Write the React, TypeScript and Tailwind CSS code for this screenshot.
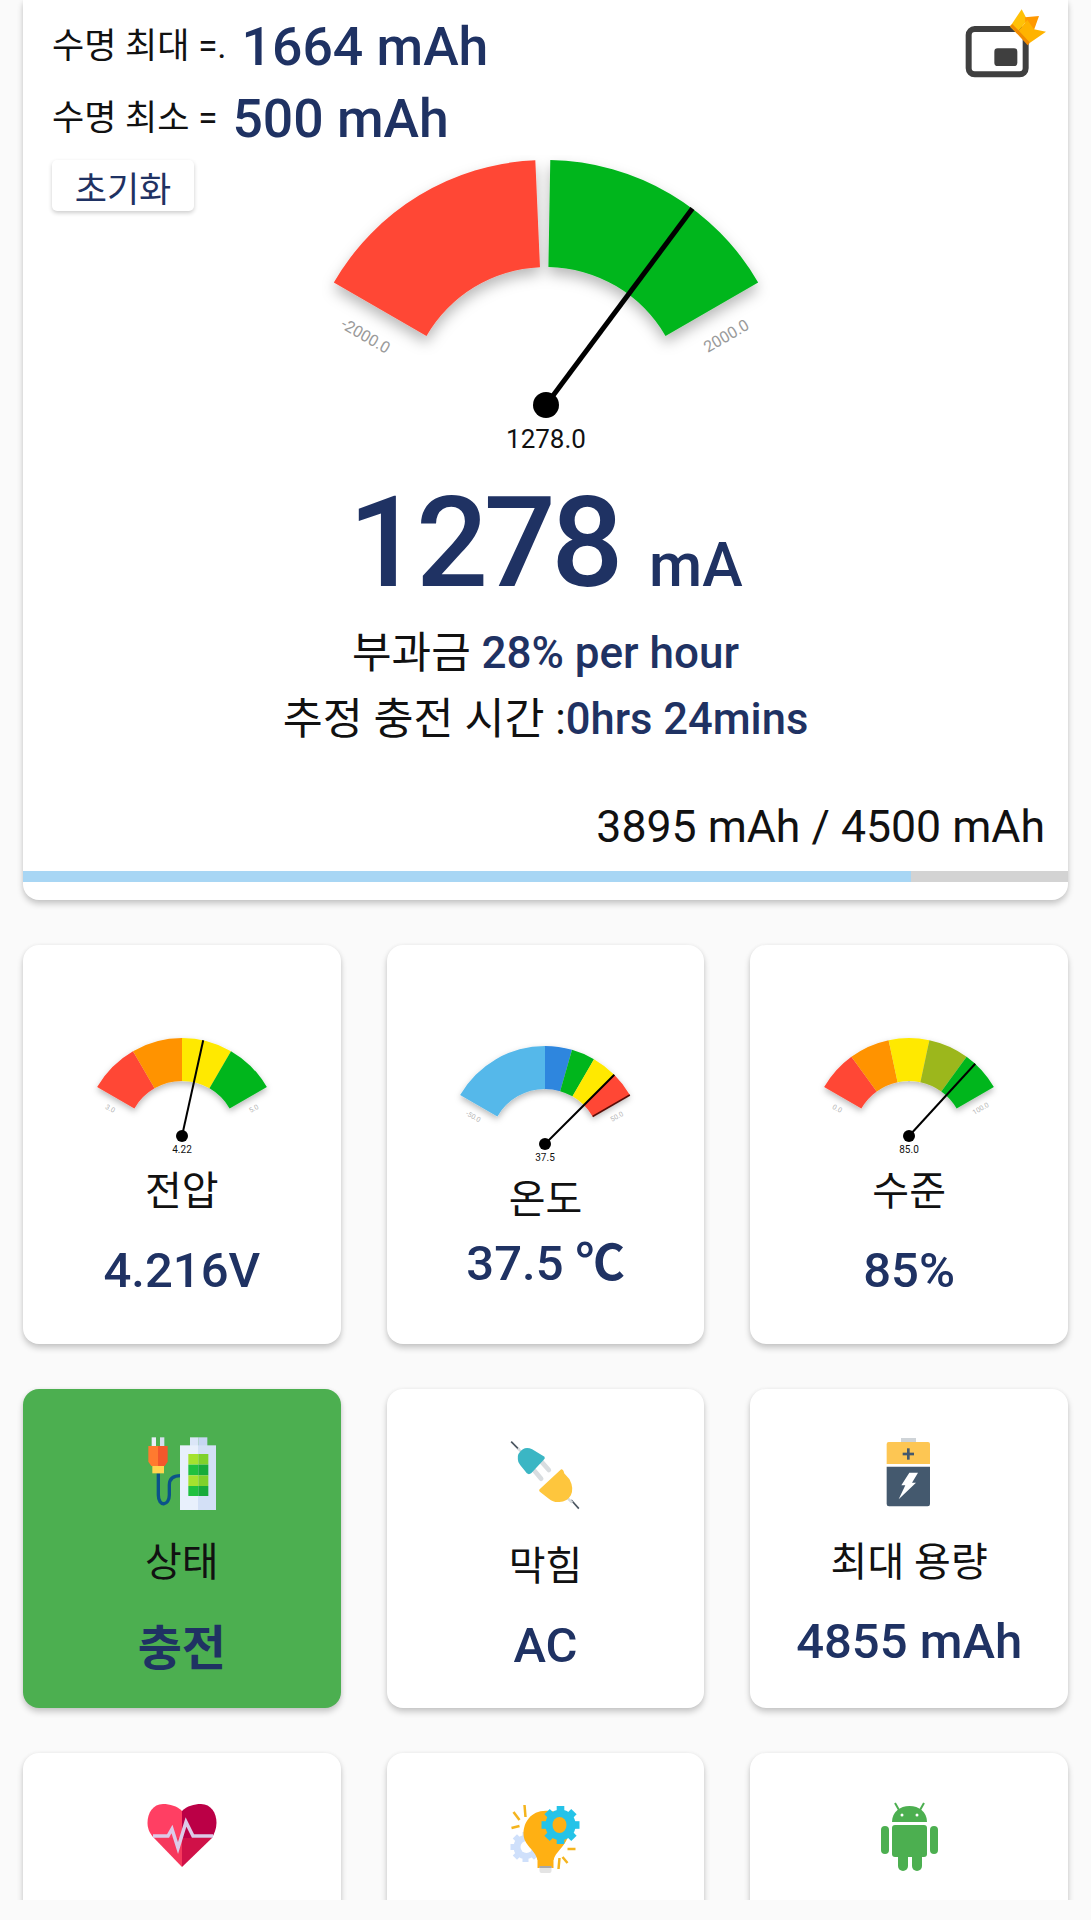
import React from 'react';

interface Segment {
  from: number;
  to: number;
  color: string;
}

interface GaugeProps {
  id: string;
  width: number;
  height: number;
  cy: number;
  outer: number;
  inner: number;
  segments: Segment[];
  angle: number;
  needleWidth: number;
  hub: number;
  value: string;
  valueSize: number;
  valueY: number;
  min: string;
  max: string;
  tickSize: number;
  tickColor: string;
  tickX: number;
  tickY: number;
  shadow: number;
  edge?: boolean;
}

const polar = (cx: number, cy: number, radius: number, deg: number) => {
  const rad = (deg * Math.PI) / 180;
  return [cx + radius * Math.sin(rad), cy - radius * Math.cos(rad)];
};

const arcPath = (cx: number, cy: number, outer: number, inner: number, from: number, to: number) => {
  const [x0, y0] = polar(cx, cy, outer, from);
  const [x1, y1] = polar(cx, cy, outer, to);
  const [x2, y2] = polar(cx, cy, inner, to);
  const [x3, y3] = polar(cx, cy, inner, from);
  return `M${x0} ${y0}A${outer} ${outer} 0 0 1 ${x1} ${y1}L${x2} ${y2}A${inner} ${inner} 0 0 0 ${x3} ${y3}Z`;
};

const Gauge: React.FC<GaugeProps> = (p) => {
  const cx = p.width / 2;
  const [tipX, tipY] = polar(cx, p.cy, p.outer, p.angle);
  const [e0x, e0y] = polar(cx, p.cy, p.inner, 60);
  const [e1x, e1y] = polar(cx, p.cy, p.outer, 60);
  return (
    <svg width={p.width} height={p.height} viewBox={`0 0 ${p.width} ${p.height}`} className="block shrink-0">
      <defs>
        <filter id={p.id} x="-20%" y="-20%" width="140%" height="160%">
          <feDropShadow dx="0" dy={p.shadow} stdDeviation={p.shadow} floodColor="#000" floodOpacity="0.28" />
        </filter>
      </defs>
      <g filter={`url(#${p.id})`}>
        {p.segments.map((s) => (
          <path key={s.from} d={arcPath(cx, p.cy, p.outer, p.inner, s.from, s.to)} fill={s.color} />
        ))}
      </g>
      {p.edge && <line x1={e0x} y1={e0y} x2={e1x} y2={e1y} stroke="#5a0d08" strokeWidth="1.5" />}
      <text
        x={cx - p.tickX}
        y={p.cy - p.tickY}
        fontSize={p.tickSize}
        fill={p.tickColor}
        textAnchor="middle"
        dominantBaseline="middle"
        transform={`rotate(30 ${cx - p.tickX} ${p.cy - p.tickY})`}
      >
        {p.min}
      </text>
      <text
        x={cx + p.tickX}
        y={p.cy - p.tickY}
        fontSize={p.tickSize}
        fill={p.tickColor}
        textAnchor="middle"
        dominantBaseline="middle"
        transform={`rotate(-30 ${cx + p.tickX} ${p.cy - p.tickY})`}
      >
        {p.max}
      </text>
      <line x1={cx} y1={p.cy} x2={tipX} y2={tipY} stroke="#000" strokeWidth={p.needleWidth} />
      <circle cx={cx} cy={p.cy} r={p.hub} fill="#000" />
      <text x={cx} y={p.valueY} fontSize={p.valueSize} fill="#111" textAnchor="middle" dominantBaseline="middle">
        {p.value}
      </text>
    </svg>
  );
};

const smallGauge = {
  width: 260,
  height: 145,
  cy: 120,
  outer: 98,
  inner: 55,
  needleWidth: 2,
  hub: 6,
  valueSize: 10,
  valueY: 134,
  tickSize: 7,
  tickColor: '#b5b5b5',
  tickX: 72,
  tickY: 27,
  shadow: 3,
};

const PipIcon = () => (
  <svg width="88" height="75" viewBox="30 15 264 225" className="block shrink-0 mt-[5px]">
    <rect x="56" y="87" width="171" height="136" rx="18" fill="none" stroke="#3f3f3f" strokeWidth="18" />
    <rect x="133" y="145" width="69" height="53" rx="10" fill="#3f3f3f" />
    <polygon points="180,80 215,28 232,60 200,100" fill="#ffc107" />
    <polygon points="225,52 267,48 252,90 228,100" fill="#ff9800" />
    <polygon points="200,100 232,60 252,88 288,95 240,128" fill="#ffb300" />
    <polygon points="180,78 187,72 240,128 233,136" fill="#f08a00" />
  </svg>
);

const ChargingIcon = () => (
  <svg width="120" height="100" viewBox="6 0 360 300" className="block shrink-0">
    <rect x="95" y="52" width="13" height="28" fill="#e8eef8" />
    <rect x="120" y="52" width="13" height="28" fill="#d5deee" />
    <path d="M115 160V225C115 262 148 258 148 225V195C148 172 165 167 182 167" fill="none" stroke="#0b5389" strokeWidth="10" />
    <path d="M85 78H114V138H94L85 125Z" fill="#ff7a2f" />
    <path d="M114 78H143V125L134 138H114Z" fill="#f2572b" />
    <rect x="97" y="138" width="35" height="22" fill="#ffd54f" />
    <rect x="210" y="52" width="26" height="28" fill="#dbe6f8" />
    <rect x="236" y="52" width="26" height="28" fill="#c6d6f2" />
    <rect x="180" y="76" width="54" height="194" fill="#e8f0fc" />
    <rect x="234" y="76" width="54" height="194" fill="#d3e0f6" />
    <rect x="205" y="102" width="30" height="32" fill="#a4e22f" />
    <rect x="235" y="102" width="30" height="32" fill="#7fd12b" />
    <rect x="205" y="134" width="30" height="32" fill="#1fc13f" />
    <rect x="235" y="134" width="30" height="32" fill="#17ab3a" />
    <rect x="205" y="166" width="30" height="32" fill="#a4e22f" />
    <rect x="235" y="166" width="30" height="32" fill="#7fd12b" />
    <rect x="205" y="198" width="30" height="30" fill="#1fc13f" />
    <rect x="235" y="198" width="30" height="30" fill="#17ab3a" />
  </svg>
);

const PlugIcon = () => (
  <svg width="120" height="100" viewBox="-13.5 0 360 300" className="block shrink-0">
    <line x1="65" y1="65" x2="88" y2="88" stroke="#4a5560" strokeWidth="5" />
    <line x1="245" y1="240" x2="268" y2="266" stroke="#4a5560" strokeWidth="5" />
    <line x1="85" y1="85" x2="100" y2="100" stroke="#d8dde0" strokeWidth="7" />
    <line x1="232" y1="232" x2="248" y2="248" stroke="#d8dde0" strokeWidth="8" />
    <line x1="133" y1="150" x2="155" y2="176" stroke="#d9dde0" strokeWidth="14" strokeLinecap="round" />
    <line x1="155" y1="124" x2="178" y2="150" stroke="#d9dde0" strokeWidth="14" strokeLinecap="round" />
    <path d="M85 118Q82 100 100 88Q112 80 128 88L165 110Q168 116 162 120L125 160Q118 165 112 160L92 135Q85 128 85 118Z" fill="#3bb6c4" />
    <path d="M215 148Q222 148 224 160L240 178Q254 205 244 226Q232 248 205 246Q190 246 178 236L152 216Q146 210 152 206Z" fill="#fec63d" />
  </svg>
);

const BatteryIcon = () => (
  <svg width="120" height="100" viewBox="-33 0 360 300" className="block shrink-0">
    <rect x="123" y="54" width="45" height="14" fill="#cfd4d8" />
    <path d="M80 132V72Q80 66 86 66H204Q210 66 210 72V132Z" fill="#fdc653" />
    <path d="M80 140H210V252Q210 259 203 259H87Q80 259 80 252Z" fill="#44596e" />
    <rect x="141" y="85" width="8" height="34" fill="#44596e" />
    <rect x="128" y="98" width="34" height="8" fill="#44596e" />
    <polygon points="148,158 174,158 156,188 168,188 116,238 136,196 124,196" fill="#fff" />
  </svg>
);

const HeartIcon = () => (
  <svg width="120" height="100" viewBox="122 1784 120 100" className="block shrink-0">
    <path d="M182 1811C177 1806 170 1804 163 1804C153 1804 147.500 1813 147.500 1823C147.500 1829 150 1834 154 1838H182Z" fill="#ff3f63" />
    <path d="M182 1811C187 1806 194 1804 201 1804C211 1804 216.500 1813 216.500 1823C216.500 1829 214 1834 212 1838H182Z" fill="#bb0046" />
    <path d="M154 1838H182V1867Z" fill="#f6385c" />
    <path d="M212 1838H182V1867Z" fill="#d01148" />
    <polyline
      points="153,1836 168,1836 172,1829 178,1848 186,1822 193,1836 213,1836"
      fill="none"
      stroke="#dccbe8"
      strokeWidth="3.5"
    />
  </svg>
);

const Gear = ({ cx, cy, r, color }: { cx: number; cy: number; r: number; color: string }) => (
  <g>
    <circle cx={cx} cy={cy} r={r * 0.8} fill={color} />
    {[0, 45, 90, 135, 180, 225, 270, 315].map((a) => (
      <rect
        key={a}
        x={cx - r * 0.2}
        y={cy - r}
        width={r * 0.4}
        height={r * 0.4}
        fill={color}
        transform={`rotate(${a} ${cx} ${cy})`}
      />
    ))}
  </g>
);

const IdeaIcon = () => (
  <svg width="120" height="100" viewBox="485.5 1784 120 100" className="block shrink-0">
    <Gear cx={526} cy={1847} r={15} color="#cfe0fb" />
    <circle cx="527" cy="1847" r="6" fill="#fff" />
    <rect x="538" y="1858" width="16" height="10" fill="#ffb013" />
    <rect x="540" y="1866" width="12" height="7" rx="2" fill="#e4e4e4" />
    <rect x="540" y="1866" width="12" height="2" fill="#a8a8a8" />
    <path d="M550 1811C532 1809 524 1822 524 1834C524 1845 536 1850 538 1860H554C556 1852 564 1848 568 1838C572 1825 566 1812 550 1811Z" fill="#ffb013" />
    <Gear cx={561} cy={1825} r={19} color="#25c3e8" />
    <ellipse cx="560" cy="1825" rx="7" ry="8" fill="#ffb013" />
    <g stroke="#f4b41e" strokeWidth="2.5" fill="none">
      <line x1="525" y1="1805" x2="526" y2="1817" />
      <line x1="514" y1="1812" x2="520" y2="1820" />
      <line x1="512" y1="1828" x2="520" y2="1826" />
      <line x1="568" y1="1849" x2="576" y2="1849" />
      <line x1="563" y1="1857" x2="568" y2="1863" />
      <line x1="560" y1="1858" x2="559" y2="1869" />
    </g>
  </svg>
);

const AndroidIcon = () => (
  <svg width="120" height="100" viewBox="849 1784 120 100" className="block shrink-0">
    <g fill="#4caf50">
      <path d="M892 1822C892 1812 900 1806 909.500 1806C919 1806 927 1812 927 1822Z" />
      <rect x="892" y="1825" width="35" height="32" rx="3" />
      <rect x="881" y="1826" width="8" height="28" rx="4" />
      <rect x="930" y="1826" width="8" height="28" rx="4" />
      <rect x="898" y="1850" width="10" height="21" rx="5" />
      <rect x="912" y="1850" width="10" height="21" rx="5" />
    </g>
    <line x1="895" y1="1803" x2="899" y2="1810" stroke="#4caf50" strokeWidth="2" />
    <line x1="924" y1="1803" x2="920" y2="1810" stroke="#4caf50" strokeWidth="2" />
    <circle cx="902" cy="1815" r="1.500" fill="#fff" />
    <circle cx="917" cy="1815" r="1.500" fill="#fff" />
  </svg>
);

const cardClass = 'rounded-[16px] shadow-[0_4px_6px_rgba(0,0,0,0.2),0_0_4px_rgba(0,0,0,0.05)] flex flex-col items-center';
const labelClass = 'h-[50px] leading-[50px] text-[40px] text-[#111] whitespace-nowrap';
const valueClass = 'h-[60px] leading-[60px] text-[49px] font-medium text-[#1f3263] whitespace-nowrap';

export default function App() {
  return (
    <div className="w-[1091px] h-[1920px] overflow-hidden flex flex-col bg-[#fafafa] font-[Roboto,'Noto_Sans_CJK_KR',sans-serif]">
      <div className="flex-1 min-h-0 overflow-hidden px-[23px] flex flex-col gap-[45px]">
        {/* main current panel */}
        <div className="shrink-0 bg-white rounded-b-[16px] shadow-[0_4px_6px_rgba(0,0,0,0.2),0_0_4px_rgba(0,0,0,0.05)] flex flex-col">
          <div className="flex justify-between pl-[29px] pr-[20px]">
            <div className="pt-[12px]">
              <div className="h-[71px] flex items-center gap-[15px] whitespace-nowrap">
                <span className="text-[35px] text-[#111]">수명 최대 =.</span>
                <span className="text-[53.5px] font-medium text-[#1f3263]">1664 mAh</span>
              </div>
              <div className="h-[72px] flex items-center gap-[15px] whitespace-nowrap">
                <span className="text-[35px] text-[#111]">수명 최소 =</span>
                <span className="text-[53.5px] font-medium text-[#1f3263]">500 mAh</span>
              </div>
            </div>
            <PipIcon />
          </div>
          <div className="grid">
            <button className="col-start-1 row-start-1 self-start justify-self-start ml-[29px] mt-[5px] w-[142px] h-[51px] bg-white rounded-[5px] shadow-[0_2px_4px_rgba(0,0,0,0.2)] text-[35px] leading-[51px] pt-[5px] text-[#1f3263] z-10">
              초기화
            </button>
            <div className="col-start-1 row-start-1 justify-self-center">
              <Gauge
                id="main-gauge"
                width={540}
                height={300}
                cy={250}
                outer={245}
                inner={138}
                segments={[
                  { from: -60, to: -2.5, color: '#ff4735' },
                  { from: 1, to: 60, color: '#04b61e' },
                ]}
                angle={36.7}
                needleWidth={5}
                hub={13}
                value="1278.0"
                valueSize={26}
                valueY={286}
                min="-2000.0"
                max="2000.0"
                tickSize={16}
                tickColor="#9a9a9a"
                tickX={181}
                tickY={68}
                shadow={7}
              />
            </div>
          </div>
          <div className="mt-[18px] h-[140px] flex items-baseline justify-center gap-[30px] text-[#1f3263] font-medium whitespace-nowrap">
            <span className="text-[127px] leading-[140px] tracking-[-4.5px]">1278</span>
            <span className="text-[61px] leading-[140px]">mA</span>
          </div>
          <div className="mt-[10px] h-[60px] leading-[60px] text-center text-[43px] text-[#111] whitespace-nowrap">
            부과금 <span className="text-[44px] font-medium text-[#1f3263]">28% per hour</span>
          </div>
          <div className="mt-[7px] h-[60px] leading-[60px] text-center text-[43.5px] text-[#111] whitespace-nowrap">
            추정 충전 시간 :<span className="font-medium text-[#1f3263]">0hrs 24mins</span>
          </div>
          <div className="mt-[47px] h-[60px] leading-[60px] pr-[23px] text-right text-[44.6px] text-[#111] whitespace-nowrap">
            3895 mAh / 4500 mAh
          </div>
          <div className="mt-[14px] h-[11px] bg-[#d3d3d3]">
            <div className="h-full w-[888px] bg-[#a8d6f4]" />
          </div>
          <div className="h-[18px]" />
        </div>

        {/* gauges */}
        <div className="shrink-0 grid grid-cols-3 gap-[46px]">
          <div className={`${cardClass} bg-white h-[399px] pt-[71px]`}>
            <Gauge
              id="volt"
              {...smallGauge}
              segments={[
                { from: -60, to: -30, color: '#ff4735' },
                { from: -30, to: 0, color: '#ff9305' },
                { from: 0, to: 30, color: '#ffe900' },
                { from: 30, to: 60, color: '#04b61e' },
              ]}
              angle={12.5}
              value="4.22"
              min="3.0"
              max="5.0"
            />
            <div className={`${labelClass} mt-[6px]`}>전압</div>
            <div className={`${valueClass} mt-[24px]`}>4.216V</div>
          </div>
          <div className={`${cardClass} bg-white h-[399px] pt-[79px]`}>
            <Gauge
              id="temp"
              {...smallGauge}
              segments={[
                { from: -60, to: 0, color: '#55b8ea' },
                { from: 0, to: 16, color: '#2e86de' },
                { from: 16, to: 30, color: '#04b61e' },
                { from: 30, to: 45, color: '#ffe900' },
                { from: 45, to: 60, color: '#ff4735' },
              ]}
              angle={45}
              value="37.5"
              min="-50.0"
              max="50.0"
              edge
            />
            <div className={`${labelClass} mt-[6px]`}>온도</div>
            <div className={`${valueClass} mt-[9px]`}>
              37.5 <span className="font-bold">℃</span>
            </div>
          </div>
          <div className={`${cardClass} bg-white h-[399px] pt-[71px]`}>
            <Gauge
              id="level"
              {...smallGauge}
              segments={[
                { from: -60, to: -36, color: '#ff4735' },
                { from: -36, to: -12, color: '#ff9305' },
                { from: -12, to: 12, color: '#ffe900' },
                { from: 12, to: 36, color: '#9cb71e' },
                { from: 36, to: 60, color: '#04b61e' },
              ]}
              angle={42.5}
              value="85.0"
              min="0.0"
              max="100.0"
            />
            <div className={`${labelClass} mt-[6px]`}>수준</div>
            <div className={`${valueClass} mt-[24px]`}>85%</div>
          </div>
        </div>

        {/* battery facts */}
        <div className="shrink-0 grid grid-cols-3 gap-[46px]">
          <div className={`${cardClass} bg-[#4caf50] h-[319px] pt-[31px]`}>
            <ChargingIcon />
            <div className={`${labelClass} mt-[18px]`}>상태</div>
            <div className="h-[60px] leading-[60px] text-[48px] font-bold text-[#1f3263] mt-[31px] whitespace-nowrap">충전</div>
          </div>
          <div className={`${cardClass} bg-white h-[319px] pt-[31px]`}>
            <PlugIcon />
            <div className={`${labelClass} mt-[22px]`}>막힘</div>
            <div className={`${valueClass} mt-[24px]`}>AC</div>
          </div>
          <div className={`${cardClass} bg-white h-[319px] pt-[31px]`}>
            <BatteryIcon />
            <div className={`${labelClass} mt-[18px]`}>최대 용량</div>
            <div className={`${valueClass} mt-[24px]`}>4855 mAh</div>
          </div>
        </div>

        <div className="shrink-0 grid grid-cols-3 gap-[46px]">
          <div className={`${cardClass} bg-white h-[319px] pt-[31px]`}>
            <HeartIcon />
          </div>
          <div className={`${cardClass} bg-white h-[319px] pt-[31px]`}>
            <IdeaIcon />
          </div>
          <div className={`${cardClass} bg-white h-[319px] pt-[31px]`}>
            <AndroidIcon />
          </div>
        </div>
      </div>
      <div className="h-[20px] shrink-0 bg-[#fafafa]" />
    </div>
  );
}
